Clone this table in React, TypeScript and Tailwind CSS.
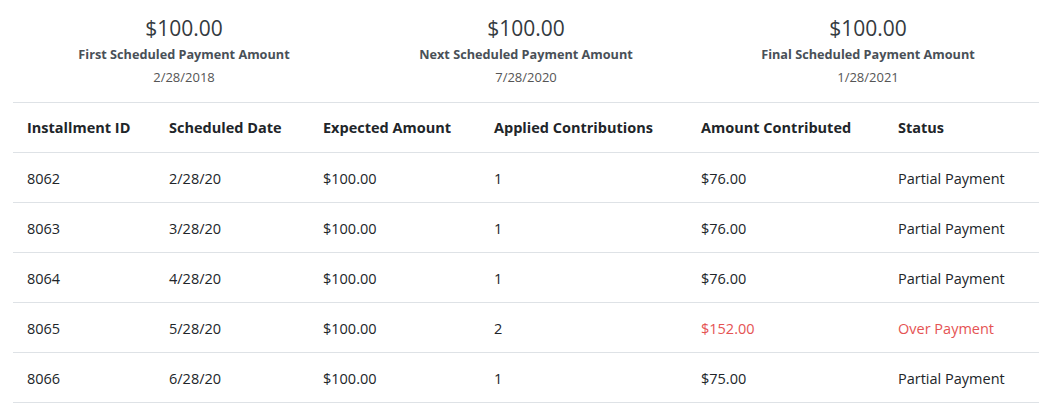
const summary = [
  { amount: "$100.00", label: "First Scheduled Payment Amount", date: "2/28/2018" },
  { amount: "$100.00", label: "Next Scheduled Payment Amount", date: "7/28/2020" },
  { amount: "$100.00", label: "Final Scheduled Payment Amount", date: "1/28/2021" },
];

const rows = [
  { id: "8062", date: "2/28/20", expected: "$100.00", applied: "1", contributed: "$76.00", status: "Partial Payment", over: false },
  { id: "8063", date: "3/28/20", expected: "$100.00", applied: "1", contributed: "$76.00", status: "Partial Payment", over: false },
  { id: "8064", date: "4/28/20", expected: "$100.00", applied: "1", contributed: "$76.00", status: "Partial Payment", over: false },
  { id: "8065", date: "5/28/20", expected: "$100.00", applied: "2", contributed: "$152.00", status: "Over Payment", over: true },
  { id: "8066", date: "6/28/20", expected: "$100.00", applied: "1", contributed: "$75.00", status: "Partial Payment", over: false },
];

const cols = "grid grid-cols-[142px_154px_171px_207px_197px_1fr]";

export default function App() {
  return (
    <div className="w-[1052px] h-[409px] bg-white px-[13px] pt-[14px] text-[#212529] font-['Open_Sans',sans-serif] overflow-hidden">
      <div className="grid grid-cols-3 h-[88px]">
        {summary.map((s) => (
          <div key={s.label} className="flex flex-col items-center">
            <div className="text-[21px] leading-[28px] text-[#343a40]">{s.amount}</div>
            <div className="mt-[2px] text-[12.7px] leading-[20px] font-bold text-[#495057]">{s.label}</div>
            <div className="mt-[1px] text-[13px] leading-[24px] text-[#555]">{s.date}</div>
          </div>
        ))}
      </div>
      <div className="border-t border-[#dee2e6] text-[14.5px]">
        <div className={`${cols} h-[50px] items-center border-b border-[#dee2e6] font-bold`}>
          <div className="pl-[14px]">Installment ID</div>
          <div className="pl-[14px]">Scheduled Date</div>
          <div className="pl-[14px]">Expected Amount</div>
          <div className="pl-[14px]">Applied Contributions</div>
          <div className="pl-[14px]">Amount Contributed</div>
          <div className="pl-[14px]">Status</div>
        </div>
        {rows.map((r) => (
          <div key={r.id} className={`${cols} h-[50px] items-center border-b border-[#dee2e6] pt-[2px]`}>
            <div className="pl-[14px]">{r.id}</div>
            <div className="pl-[14px]">{r.date}</div>
            <div className="pl-[14px]">{r.expected}</div>
            <div className="pl-[14px]">{r.applied}</div>
            <div className={`pl-[14px] ${r.over ? "text-[#e55353]" : ""}`}>{r.contributed}</div>
            <div className={`pl-[14px] ${r.over ? "text-[#e55353]" : ""}`}>{r.status}</div>
          </div>
        ))}
      </div>
    </div>
  );
}
